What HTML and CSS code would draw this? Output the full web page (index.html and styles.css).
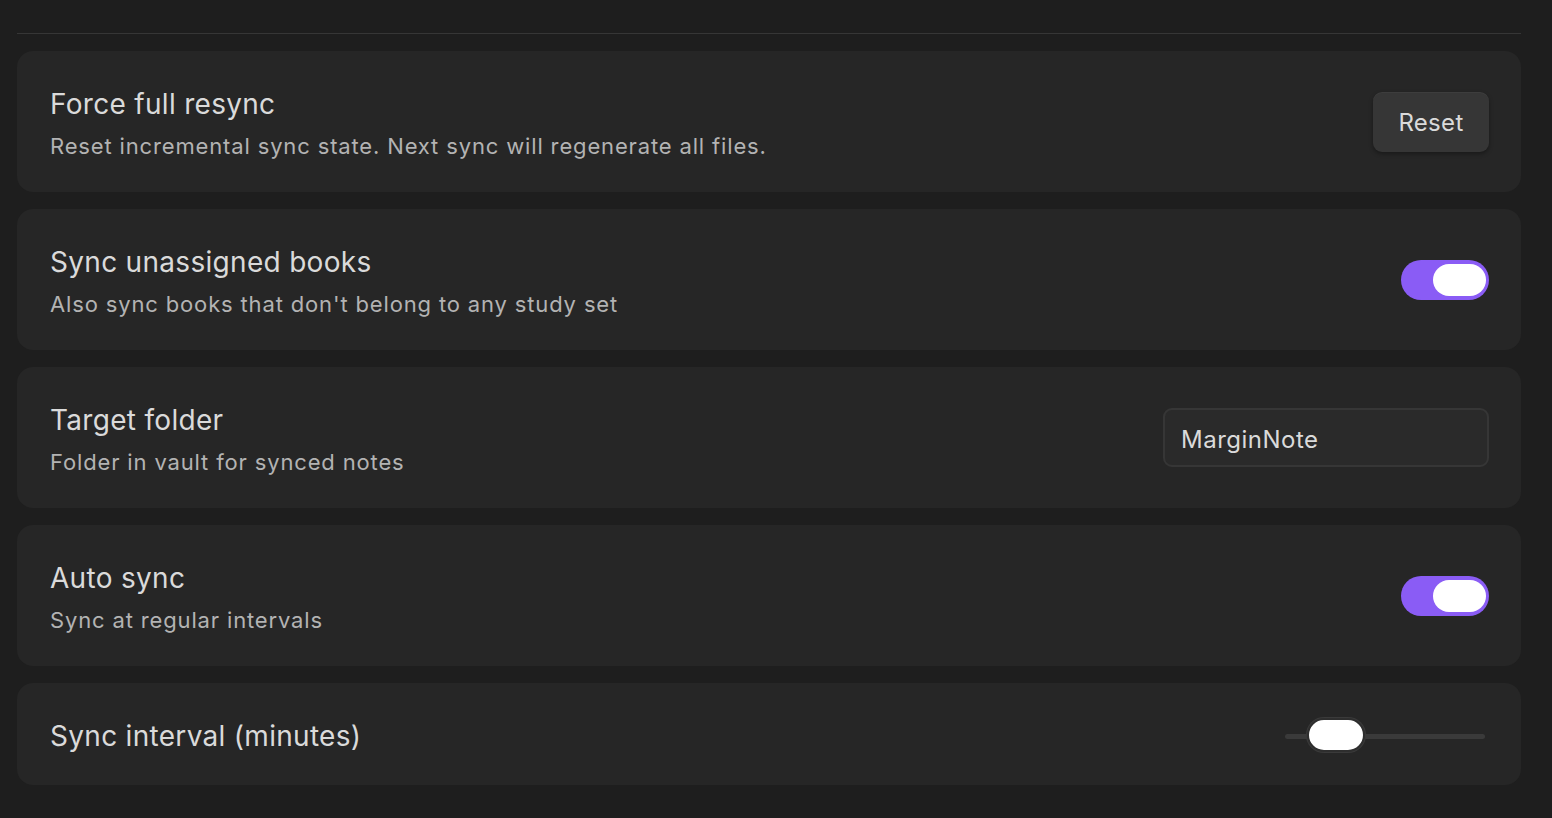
FILE: index.html
```html
<!DOCTYPE html>
<html>
<head>
    <meta charset="UTF-8">
    <title>Settings</title>
    <link rel="stylesheet" href="styles.css">
</head>
<body>
    <div class="settings">
        <div class="divider"></div>

        <div class="item">
            <div class="info">
                <div class="name">Force full resync</div>
                <div class="desc">Reset incremental sync state. Next sync will regenerate all files.</div>
            </div>
            <div class="control">
                <button class="btn">Reset</button>
            </div>
        </div>

        <div class="item">
            <div class="info">
                <div class="name">Sync unassigned books</div>
                <div class="desc">Also sync books that don't belong to any study set</div>
            </div>
            <div class="control">
                <div class="toggle on"><div class="knob"></div></div>
            </div>
        </div>

        <div class="item">
            <div class="info">
                <div class="name">Target folder</div>
                <div class="desc">Folder in vault for synced notes</div>
            </div>
            <div class="control">
                <input class="text-input" type="text" value="MarginNote">
            </div>
        </div>

        <div class="item">
            <div class="info">
                <div class="name">Auto sync</div>
                <div class="desc">Sync at regular intervals</div>
            </div>
            <div class="control">
                <div class="toggle on"><div class="knob"></div></div>
            </div>
        </div>

        <div class="item">
            <div class="info">
                <div class="name">Sync interval (minutes)</div>
            </div>
            <div class="control">
                <div class="slider">
                    <div class="track"></div>
                    <div class="thumb" style="left: 22px;"></div>
                </div>
            </div>
        </div>
    </div>
</body>
</html>
```

FILE: styles.css
```css
body {
    margin: 0;
    background-color: #1e1e1e;
    font-family: Inter, "Noto Sans", sans-serif;
    color: #dadada;
}

.settings {
    display: flex;
    flex-direction: column;
    gap: 17px;
    padding: 33px 31px 0 17px;
}

.divider {
    height: 1px;
    background-color: #363636;
}

.item {
    display: flex;
    align-items: center;
    justify-content: space-between;
    padding: 35px 32px 31px 33px;
    background-color: #262626;
    border-radius: 16px;
}

.item .control {
    margin-top: -4px;
}

.name {
    font-size: 28px;
    line-height: 36px;
    letter-spacing: 0.3px;
    color: #dadada;
}

.desc {
    margin-top: 9px;
    font-size: 22px;
    line-height: 30px;
    color: #b3b3b3;
    letter-spacing: 0.85px;
}

.control {
    display: flex;
    align-items: center;
}

.btn {
    width: 116px;
    height: 60px;
    padding-top: 3px;
    font-family: Inter, "Noto Sans", sans-serif;
    font-size: 24px;
    letter-spacing: 0.3px;
    color: #dadada;
    background-color: #363636;
    border: none;
    border-radius: 9px;
    box-shadow: 0 2px 4px rgba(0, 0, 0, 0.35), inset 0 1px 0 rgba(255, 255, 255, 0.04);
}

.toggle {
    width: 88px;
    height: 40px;
    border-radius: 20px;
    background-color: #3f3f3f;
    display: flex;
    align-items: center;
    padding: 0 3px 0 4px;
    box-sizing: border-box;
}

.toggle.on {
    background-color: #8a5cf5;
    justify-content: flex-end;
}

.knob {
    width: 53px;
    height: 32px;
    border-radius: 16px;
    background-color: #ffffff;
}

.text-input {
    width: 326px;
    height: 59px;
    box-sizing: border-box;
    padding: 4px 16px 0 16px;
    font-family: Inter, "Noto Sans", sans-serif;
    font-size: 24px;
    letter-spacing: 0.5px;
    color: #dadada;
    background-color: #2a2a2a;
    border: 2px solid #363636;
    border-radius: 9px;
    outline: none;
}

.slider {
    position: relative;
    width: 200px;
    height: 36px;
    margin-top: 4px;
    margin-right: 4px;
    display: flex;
    align-items: center;
}

.track {
    width: 100%;
    height: 5px;
    border-radius: 3px;
    background-color: #3a3a3a;
}

.thumb {
    position: absolute;
    top: 0;
    width: 58px;
    height: 34px;
    box-sizing: border-box;
    border-radius: 17px;
    background-color: #ffffff;
    border: 2px solid #2e2e2e;
    box-shadow: 0 0 0 1px #3a3a3a;
}
```
